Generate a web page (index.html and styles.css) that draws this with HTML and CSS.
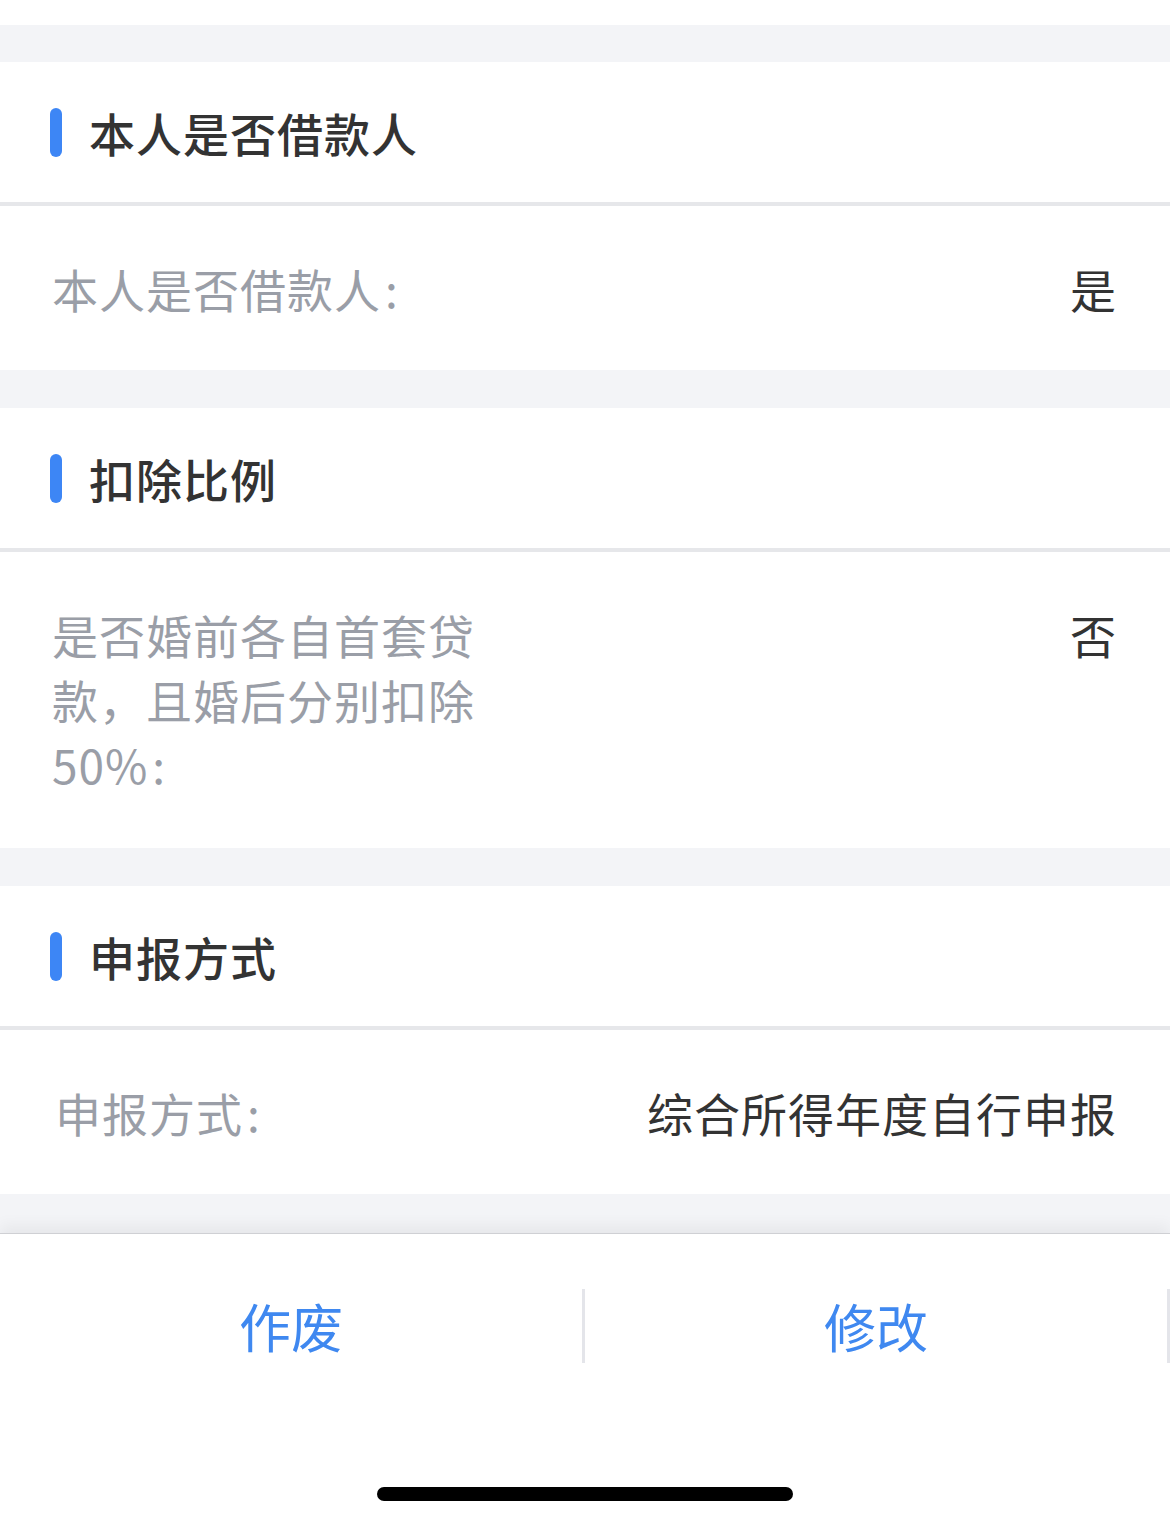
FILE: index.html
```html
<!DOCTYPE html>
<html>
<head>
    <meta charset="utf-8">
    <title>专项附加扣除</title>
    <link rel="stylesheet" href="styles.css">
</head>
<body>
    <div class="top_strip"></div>

    <div class="section">
        <div class="section_head">
            <span class="mark"></span>
            <h2>本人是否借款人</h2>
        </div>
        <div class="row">
            <div class="label">本人是否借款人&#8202;:</div>
            <div class="value">是</div>
        </div>
    </div>

    <div class="section">
        <div class="section_head">
            <span class="mark"></span>
            <h2>扣除比例</h2>
        </div>
        <div class="row row_tall">
            <div class="label">是否婚前各自首套贷款，且婚后分别扣除50%&#8202;:</div>
            <div class="value">否</div>
        </div>
    </div>

    <div class="section">
        <div class="section_head">
            <span class="mark"></span>
            <h2>申报方式</h2>
        </div>
        <div class="row">
            <div class="label label_wide">申报方式&#8202;:</div>
            <div class="value">综合所得年度自行申报</div>
        </div>
    </div>

    <div class="footer">
        <div class="actions">
            <button class="action">作废</button>
            <button class="action">修改</button>
        </div>
        <div class="home_bar"></div>
    </div>
</body>
</html>
```

FILE: styles.css
```css
body {
    font-family: "Noto Sans CJK SC", "Noto Sans", sans-serif;
    background-color: #f3f4f7; /* серый фон между блоками */
    margin: 0;
    padding: 0;
}

.top_strip {
    height: 25px;
    background-color: #fff;
}

.section {
    margin-top: 37px;
    background-color: #fff;
}

.section + .section {
    margin-top: 38px;
}

.section_head {
    display: flex;
    align-items: center;
    height: 140px;
    padding-left: 50px;
    border-bottom: 4px solid #e6e7ea;
}

.mark {
    width: 12px;
    height: 49px;
    border-radius: 6px;
    background-color: #3d86f5;
    margin-right: 27px;
}

.section_head h2 {
    margin: 0;
    font-size: 46px;
    font-weight: 500;
    color: #333;
    letter-spacing: 1px;
}

.row {
    display: flex;
    justify-content: space-between;
    align-items: flex-start;
    padding: 50px 53px 49px 52px;
    font-size: 46px;
    line-height: 65px;
}

.row_tall {
    padding-bottom: 51px;
}

.label {
    max-width: 440px;
    color: #9a9ea7;
    letter-spacing: 1px;
}

.label_wide {
    max-width: none;
    padding-left: 3px;
}

.value {
    color: #333;
    text-align: right;
    letter-spacing: 1px;
}

.footer {
    margin-top: 39px;
    background-color: #fff;
    border-top: 1px solid #cfd0d4;
    box-shadow: 0 -8px 14px rgba(0, 0, 0, 0.05);
    height: 293px;
    padding-top: 55px;
    box-sizing: border-box;
}

.actions {
    display: flex;
}

.action {
    flex: 1;
    height: 74px;
    padding: 0;
    border: none;
    border-right: 3px solid #e4e5ea;
    background: none;
    font-family: inherit;
    font-size: 52px;
    line-height: 74px;
    color: #3f88f0;
    cursor: pointer;
}

.home_bar {
    width: 416px;
    height: 14px;
    margin: 124px auto 0;
    border-radius: 7px;
    background-color: #000;
}
```
